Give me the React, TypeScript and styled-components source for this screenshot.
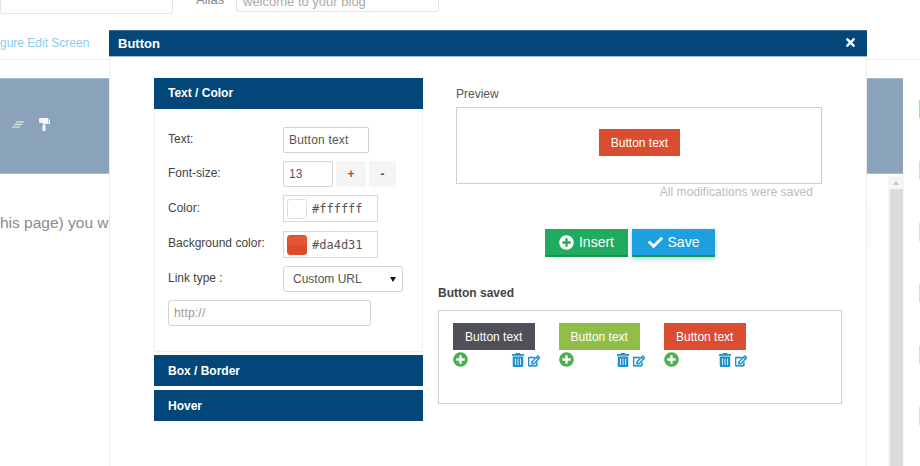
import React from 'react'
import styled, { createGlobalStyle } from 'styled-components'
import { FaCheck, FaPlusCircle, FaRegEdit, FaTimes, FaTrashAlt } from 'react-icons/fa'

const Global = createGlobalStyle`
    html, body {
        margin: 0;
        padding: 0;
        background: #fff;
    }
    * {
        box-sizing: border-box;
    }
`

const Page = styled.div`
    position: relative;
    display: flex;
    width: 920px;
    height: 466px;
    overflow: hidden;
    background: #fff;
    font-family: 'Liberation Sans', Arial, sans-serif;
    color: #444;
`

const Main = styled.div`
    display: flex;
    flex-direction: column;
    width: 903px;
`

const TopFields = styled.div`
    display: flex;
    align-items: flex-start;
    height: 14px;
`

const GhostField = styled.div<{ $width: number }>`
    width: ${p => p.$width}px;
    height: ${p => (p.$width > 190 ? 12 : 14)}px;
    border: 1px solid #e4e4e4;
    border-top: 0;
    border-radius: 0 0 3px 3px;
    padding-left: 6px;
    color: #aaa;
    font-size: 13px;
    line-height: 4px;
    overflow: hidden;
`

const AliasLabel = styled.span`
    width: 40px;
    margin-left: 23px;
    font-size: 13px;
    line-height: 0;
    color: #888;
`

const Crumb = styled.div`
    height: 46px;
    padding-top: 21px;
    border-bottom: 1px solid #eeeeee;
    font-size: 12px;
    line-height: 16px;
    color: #8ccbec;
    white-space: nowrap;
`

const Band = styled.div`
    display: flex;
    align-items: center;
    gap: 15px;
    height: 96px;
    margin-top: 18px;
    padding: 0 0 4px 12px;
    background: #8aa3bb;
    border-top: 1px solid #a4b8cb;
    border-bottom: 1px solid #a9bccf;
    color: #f4f6f8;
`

const Lower = styled.div`
    display: flex;
    flex: 1;
`

const Sentence = styled.p`
    margin: 40px 0 0;
    font-size: 15.5px;
    line-height: 18px;
    color: #8a8a8a;
    white-space: nowrap;
`

const FaintTab = styled.div`
    width: 4px;
    height: 40px;
    margin: 33px 17px 0 auto;
    background: #fafafa;
`

const Scrollbar = styled.div`
    display: flex;
    flex-direction: column;
    align-items: center;
    width: 16px;
    margin: 2px -1px 0 0;
    background: #f5f5f5;
`

const ScrollUp = styled.div`
    width: 0;
    height: 0;
    margin: 5px 0 4px;
    border-left: 3px solid transparent;
    border-right: 3px solid transparent;
    border-bottom: 4px solid #c6c6c6;
`

const ScrollThumb = styled.div`
    flex: 1;
    width: 13px;
    background: #dcdcdc;
`

const Rail = styled.div`
    display: flex;
    flex: 1;
    flex-direction: column;
    align-items: flex-end;
    gap: 43.5px;
`

const RailRule = styled.div`
    width: 100%;
    height: 1px;
    margin: 59px 0 -4px;
    background: #eeeeee;
`

const RailMark = styled.div<{ $color: string }>`
    flex-shrink: 0;
    width: 1px;
    height: 18px;
    background: ${p => p.$color};
`

const Modal = styled.div`
    position: absolute;
    left: 109px;
    top: 30px;
    bottom: 0;
    width: 758px;
    background: #fff;
    border-left: 1px solid #ededed;
    border-right: 1px solid #ededed;
`

const ModalHead = styled.header`
    display: flex;
    align-items: center;
    justify-content: space-between;
    height: 27px;
    margin: 0 -1px;
    padding: 0 10px 0 9px;
    background: #03477a;
    border-top: 1px solid #3d6f96;
    border-bottom: 1px solid #a9bed1;
    color: #fff;
    font-size: 13px;
    font-weight: 700;
`

const CloseIcon = styled(FaTimes)`
    margin-bottom: 2px;
    font-size: 13px;
`

const ModalBody = styled.div`
    display: flex;
    align-items: flex-start;
    padding: 21px 0 0 44px;
`

const Panel = styled.div`
    display: flex;
    flex-direction: column;
    width: 269px;
`

const PanelHead = styled.div<{ $open?: boolean }>`
    display: flex;
    align-items: center;
    height: 31px;
    padding: 0 0 ${p => (p.$open ? 2 : 0)}px 14px;
    background: #03477a;
    color: #fff;
    font-size: 12px;
    font-weight: 700;
`

const PanelBody = styled.div`
    display: flex;
    flex-direction: column;
    height: 243px;
    margin-bottom: 3px;
    padding: 18px 0 0 13px;
    border: 1px solid #efefef;
    border-top: 0;
`

const SpacedHead = styled(PanelHead)`
    margin-bottom: 4px;
`

const Row = styled.div<{ $height: number }>`
    display: flex;
    height: ${p => p.$height}px;
`

const Label = styled.label<{ $drop?: number }>`
    width: 115px;
    padding-top: ${p => p.$drop ?? 5}px;
    font-size: 12px;
    line-height: 14px;
    color: #444;
`

const TextInput = styled.input<{ $width: number }>`
    width: ${p => p.$width}px;
    height: 26px;
    padding: 0 5px;
    border: 1px solid #d4d4d4;
    border-radius: 1px;
    outline: 0;
    background: #fff;
    font-family: 'Liberation Sans', Arial, sans-serif;
    font-size: 12px;
    letter-spacing: 0.2px;
    color: #555;
`

const UrlInput = styled(TextInput)`
    border-radius: 3px;
    &::placeholder {
        color: #999;
    }
`

const Stepper = styled.button<{ $accent?: boolean }>`
    width: ${p => (p.$accent ? 30 : 27)}px;
    height: 26px;
    margin-left: 3px;
    padding: 0;
    border: 0;
    border-radius: 2px;
    background: #f5f5f5;
    color: ${p => (p.$accent ? '#b5491f' : '#555')};
    font-family: 'Liberation Sans', Arial, sans-serif;
    font-size: 12px;
    font-weight: 700;
`

const ColorBox = styled.div`
    display: flex;
    align-items: center;
    gap: 5px;
    width: 95px;
    height: 27px;
    padding-left: 3px;
    border: 1px solid #d8d8d8;
    font-family: 'DejaVu Sans Mono', 'Liberation Mono', monospace;
    font-size: 12px;
    color: #555;
`

const Swatch = styled.span<{ $color: string; $border: string }>`
    width: 20px;
    height: 20px;
    border: 1px solid ${p => p.$border};
    border-radius: 3px;
    background: linear-gradient(rgba(255, 255, 255, 0.07) 50%, transparent 50%), ${p => p.$color};
`

const SelectBox = styled.div`
    display: flex;
    align-items: center;
    justify-content: space-between;
    width: 120px;
    height: 26px;
    padding: 0 6px 0 9px;
    border: 1px solid #d4d4d4;
    border-radius: 3px;
    font-size: 12px;
    color: #555;
`

const Caret = styled.span`
    width: 0;
    height: 0;
    border-left: 3px solid transparent;
    border-right: 3px solid transparent;
    border-top: 5px solid #111;
`

const Side = styled.div`
    display: flex;
    flex-direction: column;
    width: 404px;
    margin-left: 15px;
`

const PreviewArea = styled.div`
    display: flex;
    flex-direction: column;
    width: 366px;
    margin-left: 18px;
`

const PreviewLabel = styled.div`
    height: 21px;
    padding-top: 9px;
    font-size: 12px;
    line-height: 14px;
    color: #555;
`

const PreviewBox = styled.div`
    display: flex;
    align-items: flex-start;
    justify-content: center;
    height: 77px;
    margin-top: 8px;
    padding: 21px 0 0 1px;
    border: 1px solid #cfcfcf;
`

const SavedNote = styled.div`
    margin: 1px 9px 0 0;
    text-align: right;
    font-size: 12px;
    letter-spacing: 0.07px;
    line-height: 14px;
    color: #bbbbbb;
`

const DemoButton = styled.div<{ $color: string }>`
    display: flex;
    flex-shrink: 0;
    align-items: center;
    justify-content: center;
    width: 81.5px;
    height: 27px;
    background: ${p => p.$color};
    color: #fff;
    font-size: 12px;
`

const Actions = styled.div`
    display: flex;
    gap: 4px;
    margin: 30px 0 0 107px;
`

const ActionButton = styled.button<{ $save?: boolean }>`
    display: flex;
    align-items: center;
    justify-content: center;
    gap: 5px;
    width: 83px;
    height: 28px;
    padding: 0;
    border: 0;
    border-bottom: 2px solid #0b9a4a;
    background: ${p => (p.$save ? '#1e9fe0' : '#21ab5f')};
    box-shadow: ${p => (p.$save ? '0 2px 5px rgba(30, 110, 170, 0.35)' : 'none')};
    color: #fff;
    font-family: 'Liberation Sans', Arial, sans-serif;
    font-size: 14px;
`

const SavedTitle = styled.div`
    margin-top: 29px;
    font-size: 12px;
    font-weight: 700;
    line-height: 14px;
    color: #444;
`

const SavedBox = styled.div`
    display: flex;
    gap: 24px;
    height: 94px;
    margin-top: 10px;
    padding: 12px 0 0 14px;
    border: 1px solid #cfcfcf;
`

const SavedItem = styled.div`
    display: flex;
    flex-direction: column;
    width: 81.5px;
`

const ItemTools = styled.div<{ $width: number }>`
    display: flex;
    flex-shrink: 0;
    align-items: flex-end;
    gap: 3px;
    width: ${p => p.$width}px;
    margin-top: 2px;
    color: #1d8fca;
    font-size: 12px;
`

const AddIcon = styled(FaPlusCircle)`
    margin-right: auto;
    color: #4caf50;
    font-size: 15px;
`

const TrashIcon = styled(FaTrashAlt)`
    font-size: 14px;
`

const EditIcon = styled(FaRegEdit)`
    stroke: currentColor;
    stroke-width: 30px;
`

const saved = [
    { color: '#4f5158', toolsWidth: 87 },
    { color: '#8fbf48', toolsWidth: 86 },
    { color: '#da4d31', toolsWidth: 83 },
]

const railColors = ['#b9d3ad', '#d8d8d8', '#d8d8d8', '#d8d8d8', '#d8d8d8', '#d8d8d8']

export default function App() {
    return (
        <Page>
            <Global />
            <Main>
                <TopFields>
                    <GhostField $width={173} />
                    <AliasLabel>Alias</AliasLabel>
                    <GhostField $width={203}>welcome to your blog</GhostField>
                </TopFields>
                <Crumb>gure Edit Screen</Crumb>
                <Band>
                    <svg width="12" height="7" viewBox="0 0 12 7" fill="none" stroke="#f1f4f7" strokeWidth="1">
                        <path d="M4 1h8M2 3.5h8M0 6h8" />
                    </svg>
                    <svg width="11" height="13" viewBox="0 0 11 13" fill="currentColor">
                        <rect x="0" y="0" width="9.5" height="5" rx="1" />
                        <path d="M10 1.5h1v4.5H5.5v1H4V5h6z" />
                        <rect x="3.5" y="7" width="3" height="6" rx="0.8" />
                    </svg>
                </Band>
                <Lower>
                    <Sentence>his page) you w</Sentence>
                    <FaintTab />
                    <Scrollbar>
                        <ScrollUp />
                        <ScrollThumb />
                    </Scrollbar>
                </Lower>
            </Main>
            <Rail>
                <RailRule />
                {railColors.map((color, i) => (
                    <RailMark key={i} $color={color} />
                ))}
            </Rail>
            <Modal>
                <ModalHead>
                    Button
                    <CloseIcon />
                </ModalHead>
                <ModalBody>
                    <Panel>
                        <PanelHead $open>Text / Color</PanelHead>
                        <PanelBody>
                            <Row $height={34}>
                                <Label>Text:</Label>
                                <TextInput $width={86} defaultValue="Button text" />
                            </Row>
                            <Row $height={34}>
                                <Label>Font-size:</Label>
                                <TextInput $width={50} defaultValue="13" />
                                <Stepper $accent>+</Stepper>
                                <Stepper>-</Stepper>
                            </Row>
                            <Row $height={36}>
                                <Label $drop={6}>Color:</Label>
                                <ColorBox>
                                    <Swatch $color="#ffffff" $border="#dddddd" />
                                    #ffffff
                                </ColorBox>
                            </Row>
                            <Row $height={35}>
                                <Label>Background color:</Label>
                                <ColorBox>
                                    <Swatch $color="#e04b2a" $border="#e04b2a" />
                                    #da4d31
                                </ColorBox>
                            </Row>
                            <Row $height={34}>
                                <Label>Link type :</Label>
                                <SelectBox>
                                    Custom URL
                                    <Caret />
                                </SelectBox>
                            </Row>
                            <UrlInput $width={203} placeholder="http://" />
                        </PanelBody>
                        <SpacedHead>Box / Border</SpacedHead>
                        <PanelHead>Hover</PanelHead>
                    </Panel>
                    <Side>
                        <PreviewArea>
                            <PreviewLabel>Preview</PreviewLabel>
                            <PreviewBox>
                                <DemoButton $color="#da4d31">Button text</DemoButton>
                            </PreviewBox>
                            <SavedNote>All modifications were saved</SavedNote>
                        </PreviewArea>
                        <Actions>
                            <ActionButton>
                                <FaPlusCircle size={15} />
                                Insert
                            </ActionButton>
                            <ActionButton $save>
                                <FaCheck size={15} />
                                Save
                            </ActionButton>
                        </Actions>
                        <SavedTitle>Button saved</SavedTitle>
                        <SavedBox>
                            {saved.map(item => (
                                <SavedItem key={item.color}>
                                    <DemoButton $color={item.color}>Button text</DemoButton>
                                    <ItemTools $width={item.toolsWidth}>
                                        <AddIcon />
                                        <TrashIcon />
                                        <EditIcon />
                                    </ItemTools>
                                </SavedItem>
                            ))}
                        </SavedBox>
                    </Side>
                </ModalBody>
            </Modal>
        </Page>
    )
}
